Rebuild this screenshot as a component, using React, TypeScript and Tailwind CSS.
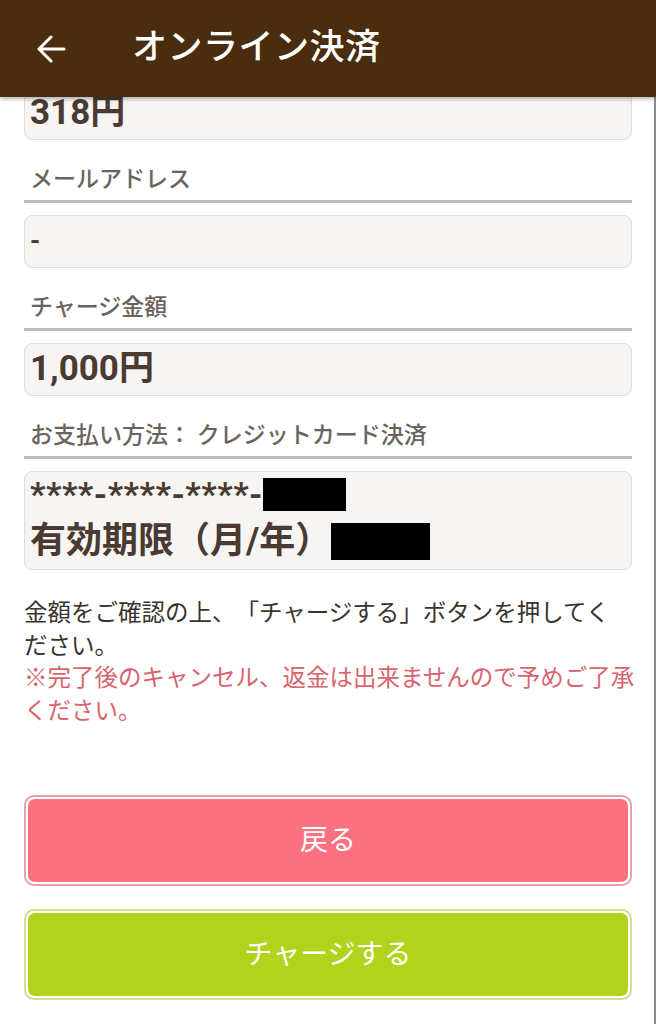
import React from 'react';

const font = { fontFamily: 'Roboto, "Noto Sans CJK JP", sans-serif' };
const jpFont = { fontFamily: '"Noto Sans CJK JP", sans-serif' };

const Label = ({ children }: { children: React.ReactNode }) => (
  <div className="mt-[24px]">
    <div className="text-[23px] leading-[32px] font-medium text-[#6b645e] pl-[6px]">{children}</div>
    <div className="mt-[4px] h-[3px] bg-[#c2b8b0]" />
  </div>
);

const ValueBox = ({ children }: { children: React.ReactNode }) => (
  <div className="mt-[12px] h-[53px] flex items-center px-[5px] rounded-lg border border-[#e0dcd8] bg-[#f7f5f3] text-[#4a3a31]">
    {children}
  </div>
);

const Button = ({ label, outer, fill }: { label: string; outer: string; fill: string }) => (
  <div className={`h-[91px] rounded-[10px] border-2 p-[2px] bg-white ${outer}`}>
    <div className={`h-full rounded-[7px] flex items-center justify-center text-white text-[28px] ${fill}`}>
      {label}
    </div>
  </div>
);

export default function App() {
  return (
    <div className="min-h-[1024px] bg-white [text-spacing-trim:space-all]" style={font}>
      <header className="relative z-10 h-[97px] bg-[#4a2c0e] flex items-center pl-[37px] shadow-[0_2px_4px_rgba(0,0,0,0.3)]">
        <svg width="29" height="28" viewBox="0 0 29 28" fill="none" stroke="white" strokeWidth="3" strokeLinecap="round" strokeLinejoin="round">
          <path d="M2 14h25M14 2L2 14l12 12" />
        </svg>
        <h1 className="ml-[66px] text-white text-[35px] font-medium tracking-[0.5px]">オンライン決済</h1>
      </header>

      <main className="pl-[24px] pr-[22px] border-r-2 border-[#8c8c8c] pb-[24px]">
        <div className="-mt-[10px] h-[53px] flex items-center px-[5px] rounded-lg border border-[#e0dcd8] bg-[#f7f5f3] text-[#4a3a31]">
          <span className="text-[35px] font-bold">318円</span>
        </div>

        <Label>メールアドレス</Label>
        <ValueBox>
          <span className="text-[26px] font-bold">-</span>
        </ValueBox>

        <Label>チャージ金額</Label>
        <ValueBox>
          <span className="text-[35px] font-bold">1,000円</span>
        </ValueBox>

        <Label>お支払い方法： クレジットカード決済</Label>
        <div className="mt-[12px] flex flex-col pt-[5px] pb-[6px] px-[5px] rounded-lg border border-[#e0dcd8] bg-[#f7f5f3] text-[#4a3a31]">
          <div className="h-[34px] flex items-center">
            <span className="text-[34px] font-bold tracking-[0.5px] leading-none">****-****-****-</span>
            <span className="w-[83px] h-[33px] bg-black" />
          </div>
          <div className="mt-[8px] h-[44px] flex items-center">
            <span className="text-[36px] font-bold leading-none">有効期限（月/年）</span>
            <span className="w-[99px] h-[37px] bg-black" />
          </div>
        </div>

        <div className="mt-[25px] text-[23.5px] leading-[32.5px]" style={jpFont}>
          <p className="text-[#3a3430]">金額をご確認の上、「チャージする」ボタンを押してください。</p>
          <p className="text-[#d9646e] whitespace-nowrap">
            ※完了後のキャンセル、返金は出来ませんので予めご了承
            <br />
            ください。
          </p>
        </div>

        <div className="mt-[70px] flex flex-col gap-[23px]">
          <Button label="戻る" outer="border-[#e0a2af]" fill="bg-[#fa717f]" />
          <Button label="チャージする" outer="border-[#cfe189]" fill="bg-[#b1d31b]" />
        </div>
      </main>
    </div>
  );
}
